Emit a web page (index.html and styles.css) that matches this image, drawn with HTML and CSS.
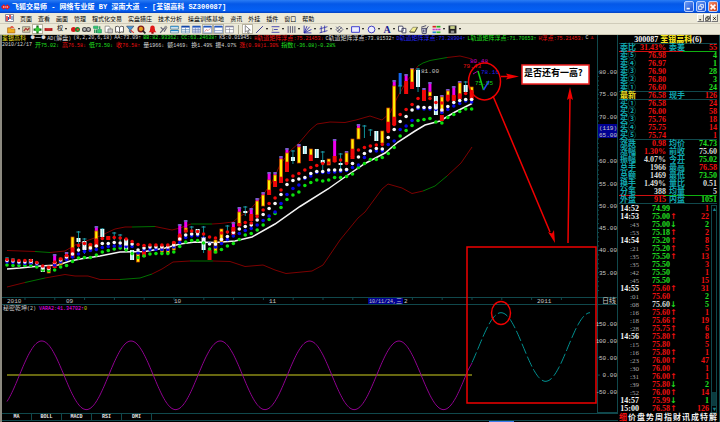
FILE: index.html
```html
<!DOCTYPE html>
<html lang="zh-CN">
<head>
<meta charset="utf-8">
<title>飞狐交易师</title>
<link rel="stylesheet" href="styles.css">
</head>
<body>
<header class="titlebar">
  <svg class="logo" viewBox="0 0 10 8"><path d="M0 4 3 1 5 3 7 1 10 4 7 7 5 5 3 7z" fill="#e81818"/><path d="M3 3v2M7 3v2M4 4h2" stroke="#ffd0d0"/></svg>
  <h1>飞狐交易师 - 网络专业版 BY 深南大道 - [荃银高科 SZ300087]</h1>
  <div class="win">
    <button aria-label="最小化"><svg viewBox="0 0 10 10"><path d="M2 7h4" stroke="#fff" stroke-width="2"/></svg></button>
    <button aria-label="还原"><svg viewBox="0 0 10 10"><path d="M4 4V2h4v4H6M2 4h4v4H2z" fill="none" stroke="#fff"/></svg></button>
    <button class="close" aria-label="关闭"><svg viewBox="0 0 10 10"><path d="m2 2 6 6M8 2 2 8" stroke="#fff" stroke-width="2"/></svg></button>
  </div>
</header>
<nav class="menubar">
  <svg class="doc" viewBox="0 0 9 8"><path d="M.5.5h8v7h-8z" fill="#fff" stroke="#889"/><path d="M2 2v5M5 1v4" stroke="#d22" stroke-width="1.5"/><path d="M3.5 3v3M7 2v4" stroke="#25a"/></svg>
  <button>页面</button><button>查看</button><button>画面</button><button>管理</button><button>程式化交易</button><button>实盘猎庄</button><button>技术分析</button><button>操盘训练基地</button><button>资讯</button><button>外挂</button><button>插件</button><button>窗口</button><button>帮助</button>
  <div class="mdi">
    <button aria-label="最小化窗口"><svg viewBox="0 0 8 8"><path d="M2 6h3" stroke="#000" stroke-width="1.5"/></svg></button>
    <button aria-label="还原窗口"><svg viewBox="0 0 8 8"><path d="M3 3V1h4v4H5M1 3h4v4H1z" fill="none" stroke="#000"/></svg></button>
    <button aria-label="关闭窗口"><svg viewBox="0 0 8 8"><path d="m2 2 4 4M6 2 2 6" stroke="#000" stroke-width="1.3"/></svg></button>
  </div>
</nav>
<div class="toolbar" role="toolbar">
  <button class="drop" aria-label="打开"><svg viewBox="0 0 16 16"><path d="M1 14V5h5l1 2h7v7z" fill="#f0b020" stroke="#a05010"/><path d="M5 5c1-4 6-4 8 0l-3 0z" fill="#e03020"/></svg></button>
  <button aria-label="保存画面"><svg viewBox="0 0 16 16"><path d="M1 3h13v10H1z" fill="#d8d0a8" stroke="#555"/><path d="m3 11 4-5 3 3 3-4" stroke="#a33" fill="none" stroke-width="2"/></svg></button>
  <button class="on" aria-label="放大"><svg viewBox="0 0 16 16"><path d="M8 1v14M1 8h14" stroke="#186818" stroke-width="4"/><circle cx="8" cy="8" r="4" fill="#3c3"/></svg></button>
  <button aria-label="缩小"><svg viewBox="0 0 16 16"><path d="M1 8h14" stroke="#b01818" stroke-width="5"/><path d="M4 7h8" stroke="#f66"/></svg></button>
  <button class="drop gap">权</button>
  <button aria-label="对比"><svg viewBox="0 0 16 16"><circle cx="4.500" cy="8" r="4.500" fill="#d81818"/><circle cx="11.500" cy="8" r="4.500" fill="#18882a"/><circle cx="12" cy="8" r="2" fill="#f33"/></svg></button>
  <button aria-label="查找"><svg viewBox="0 0 16 16"><circle cx="4.500" cy="8" r="3.500" fill="#bbb" stroke="#444" stroke-width="2"/><circle cx="11.500" cy="8" r="3.500" fill="#bbb" stroke="#444" stroke-width="2"/></svg></button>
  <button aria-label="统计"><svg viewBox="0 0 16 16"><path d="M1 2h8v4H1zM8 8h7v6H8z" fill="#3c6" stroke="#186"/><path d="M3 8v6M6 8v6M12 2v5" stroke="#1a8a4a" stroke-width="2"/></svg></button>
  <button aria-label="文件"><svg viewBox="0 0 16 16"><path d="M2 2h7l2 3v8H2z" fill="#fff" stroke="#555"/><path d="M7 7h8v7H7z" fill="#ccc" stroke="#555"/></svg></button>
  <button aria-label="书籍"><svg viewBox="0 0 16 16"><path d="M1 3q4-2 7 1 3-3 7-1v10q-4-2-7 1-3-3-7-1zM8 4v10" fill="#fff" stroke="#444" stroke-width="1.500"/></svg></button>
  <button aria-label="选股"><svg viewBox="0 0 16 16"><path d="M1 2h13l-5 6v6l-3-2V8z" fill="#4a9ad8" stroke="#235"/><path d="m8 9 6 5" stroke="#d33" stroke-width="2"/></svg></button>
  <button aria-label="搜索"><svg viewBox="0 0 16 16"><circle cx="7" cy="7" r="5" fill="#e8a020" stroke="#801818" stroke-width="2.500"/><path d="m10 10 5 5" stroke="#222" stroke-width="3"/></svg></button>
  <button aria-label="预警"><svg viewBox="0 0 16 16"><path d="M1 13q3-3 3-7 0-5 4-5t4 5q0 4 3 7z" fill="#e01818"/><path d="M6 14h4" stroke="#900" stroke-width="3"/></svg></button>
  <button aria-label="工具"><svg viewBox="0 0 16 16"><path d="m2 14 9-10M3 4l5 5M9 12l5-8" stroke="#667" stroke-width="2"/><circle cx="12" cy="4" r="2.500" fill="#999"/></svg></button>
  <button aria-label="横排"><svg viewBox="0 0 16 16"><path d="M1 2h14v5H1zM1 9h14v5H1z" fill="#fff" stroke="#157"/><path d="M1 3h14M1 10h14" stroke="#28c" stroke-width="2"/></svg></button>
  <button aria-label="列表"><svg viewBox="0 0 16 16"><path d="M1 2h14v12H1zM1 8h14M8 5v9M1 11h14" fill="#fff" stroke="#47a"/><path d="M1 3h14" stroke="#14a" stroke-width="3"/></svg></button>
  <button aria-label="网格"><svg viewBox="0 0 16 16"><path d="M1 2h14v12H1zM1 8h14M6 5v9M11 5v9M1 11h14" fill="#dde6f8" stroke="#67a"/><path d="M1 3h14" stroke="#25b" stroke-width="3"/></svg></button>
  <button class="on" aria-label="走势"><svg viewBox="0 0 16 16"><path d="M1 2h14v12H1z" fill="#fff" stroke="#46a"/><path d="M1 3h14" stroke="#25b" stroke-width="3"/><path d="m3 12 3-4 3 2 4-4" stroke="#c44" fill="none"/></svg></button>
  <button class="on" aria-label="图表"><svg viewBox="0 0 16 16"><path d="M1 2h14v12H1zM1 10h14" fill="#fff" stroke="#46a"/><path d="M1 3h14" stroke="#25b" stroke-width="3"/></svg></button>
  <button aria-label="表格"><svg viewBox="0 0 16 16"><path d="M1 2h14v12H1zM1 8h14M8 5v9" fill="#fff" stroke="#778"/><path d="M1 3h14" stroke="#779" stroke-width="2"/></svg></button>
  <span class="grip"></span>
  <button class="on" aria-label="光标"><svg viewBox="0 0 16 16"><path d="M4 1v12l3-3 2 5 2-1-2-5h4z" fill="#fff" stroke="#333"/></svg></button>
  <button class="drop" aria-label="直线"><svg viewBox="0 0 16 16"><path d="M2 14 14 2" stroke="#228" stroke-width="1.500"/></svg></button>
  <button class="drop" aria-label="水平线"><svg viewBox="0 0 16 16"><path d="M1 3h14M1 13h14M5 8h7" stroke="#33a" stroke-width="1.500"/><path d="M3 6v5" stroke="#666"/></svg></button>
  <button class="drop" aria-label="周期线"><svg viewBox="0 0 16 16"><path d="M2 2v12M6 2v12M10 2v12M14 2v12" stroke="#446" stroke-width="1.500"/></svg></button>
  <button class="drop" aria-label="扇形线"><svg viewBox="0 0 16 16"><path d="M2 1v13h13M2 14 7 2M2 14 12 3M2 14 15 8" stroke="#22a" stroke-width="1.500" fill="none"/></svg></button>
  <button class="drop" aria-label="通道"><svg viewBox="0 0 16 16"><path d="m1 7 14-4M1 14l14-4M4 2v12M10 1v12" stroke="#33a" stroke-width="1.500"/></svg></button>
  <button class="drop" aria-label="波浪"><svg viewBox="0 0 16 16"><path d="m2 8 6-6 6 6-6 6zM4 12l8-8M2 3l9 9" stroke="#557" fill="none" stroke-width="1.500"/></svg></button>
  <button class="drop" aria-label="矩形"><svg viewBox="0 0 16 16"><path d="M1 3h14v10H1z" fill="#eef" stroke="#22c" stroke-width="1.500"/></svg></button>
  <button class="drop" aria-label="圆形"><svg viewBox="0 0 16 16"><circle cx="8" cy="8" r="6" fill="#eef" stroke="#22b" stroke-width="1.500"/></svg></button>
  <button class="drop letter">A</button>
  <button aria-label="复制"><svg viewBox="0 0 16 16"><path d="M1 2h7l1 2v7H1zM7 6h7v8H7z" fill="#fff" stroke="#335" stroke-width="1.500"/></svg></button>
  <button aria-label="橡皮"><svg viewBox="0 0 16 16"><path d="m1 12 6-8h8l-5 9H2z" fill="#f4ee90" stroke="#554"/><path d="m1 12 9 1 5-9" fill="none" stroke="#443" stroke-width="1.500"/></svg></button>
  <button aria-label="清除"><svg viewBox="0 0 16 16"><path d="M3 6h9l-1 9H4z" fill="#dde" stroke="#335" stroke-width="1.500"/><path d="m2 4 9-3M6 8v5M9 8v5M10 9l5-7" stroke="#335" stroke-width="1.500"/></svg></button>
  <button class="drop" aria-label="颜色"><svg viewBox="0 0 16 16"><path d="M1 3h6" stroke="#d22" stroke-width="3"/><path d="M8 3h7" stroke="#2a2" stroke-width="3"/><path d="M1 8h14" stroke="#c3c" stroke-width="3" stroke-dasharray="4 1"/><path d="M1 13h6" stroke="#28d" stroke-width="3"/><path d="M8 13h7" stroke="#3b3" stroke-width="3"/></svg></button>
  <button class="drop" aria-label="保存"><svg viewBox="0 0 16 16"><path d="M1 1h14v14H1z" fill="#222"/><path d="M4 2h8v5H4z" fill="#c8d088"/><path d="M5 10h6v4H5z" fill="#999"/></svg></button>
</div>
<main class="desk">
  <section class="chart">
    <div class="info">
      <p><span class="y name"><i>荃银高科</i></span><span><i class="bullet">●—●</i>AD(<i>解盘</i>)</span><span>(8,2,20,6,18)</span><span>AA:73.09↑</span><span class="g">BB:82.93362↓</span><span class="g">CC:63.24638↑</span><span>KS:0.01945↓</span><span class="r">H<i>轨道矩阵浮点</i>:75.21453↓</span><span>C<i>轨道矩阵浮点</i>:73.81532↑</span><span class="b">D<i>轨道矩阵浮点</i>:73.28904↑</span><span class="g">L<i>轨道矩阵浮点</i>:71.70653↑</span><span class="r">H<i>浮点</i>:75.21453↓</span><span>C</span><span class="r">⚓</span></p>
      <p class="day"><span>2010/12/17</span><span class="g"><i>开</i>75.02↓</span><span class="r"><i>高</i>76.58↓</span><span class="g"><i>低</i>73.50↓</span><span class="r"><i>收</i>76.58↑</span><span><i>量</i>1966↓</span><span><i>额</i>1469↓</span><span><i>换</i>1.49%</span><span><i>振</i>4.07%</span><span class="r"><i>涨</i>(0.98)1.30%</span><span class="g"><i>指数</i>(-36.08)-0.28%</span></p>
    </div>
    <svg id="plot" viewBox="2 35 616 378">
      <g class="frame">
        <path d="M597.5 35V413M617.500 35V413M2 297.500H618M2 304.500H618M597 412.500H618"/>
        <path id="ticks"/>
      </g>
      <g id="bands"></g>
      <path id="average" class="average"/>
      <g id="candles"></g>
      <g id="dots"></g>
      <path class="zero" d="M7 375H472"/>
      <path id="wave" class="wave"/>
      <path id="forecast" class="forecast"/>
      <g id="scale" class="scale"></g>
      <rect x="598" y="124" width="19" height="14" fill="#000090"/>
      <g class="scale"><text x="617" y="130">(119)</text><text x="617" y="137">65.00</text></g>
      <g class="axis">
        <text x="7" y="303">2010</text><text x="66" y="303">09</text><text x="174" y="303">10</text><text x="269" y="303">11</text>
        <rect x="368" y="298" width="35" height="6" fill="#000090"/>
        <text class="small" x="369" y="303">10/11/24,<tspan class="mid">三</tspan></text><text x="404" y="303">2</text><text x="537" y="303">2011</text>
        <text class="cjk" x="602" y="303">日线</text>
        <text class="small" x="3" y="310"><tspan class="mid">秘密乾坤</tspan>(2)</text><text class="small" x="39" y="310" fill="#f0f">VARA2:41.34702↑<tspan fill="#cc0">0</tspan></text>
        <text x="421" y="73">81.00</text><text x="463" y="68" fill="#e01010">79.43</text><text x="470" y="63" fill="#d000d0">80.48</text>
        <text x="481" y="74" fill="#2020f0">78.16</text><text x="475" y="85" fill="#18d018">75.95</text>
      </g>
      <path d="m473 74 5-3" stroke="#a0a"/><path d="m478 71 5.500 19" stroke="#1c1" stroke-width="1.500"/><path d="m483.500 90 5.500-9" stroke="#24e" stroke-width="1.500"/>
      <g class="mark">
        <ellipse cx="484.500" cy="81.500" rx="16" ry="18.500"/>
        <ellipse cx="501" cy="313" rx="9.500" ry="11.500"/>
        <rect x="467" y="247" width="129" height="156"/>
        <path d="M501 76.500H512M493 96 550 232M568 243 570 98"/>
        <path class="head" d="m519 76.500-13-3 2 3-2 3zM555 243l-7-11 4 1.500 2-3.500zM570 87l-3 13 3-2 3 2z"/>
      </g>
      <rect x="522" y="65" width="67" height="19" fill="#fff" stroke="#f02020" stroke-width="1.500"/>
      <text class="note" x="524" y="76">是否还有一高?</text>
    </svg>
    <div class="tabs"><button>MA</button><button>BOLL</button><button>MACD</button><button>RSI</button><button>DMI</button></div>
    <div class="edge"><span></span></div>
  </section>
  <aside class="side">
    <h2>300087 <b>荃银高科</b>(6)</h2>
    <table class="quote">
      <tbody>
      <tr class="split"><th>委比</th><td class="r">31.43%</td><th>委差</th><td class="r">55</td></tr>
      <tr><th>卖⑤</th><td class="r">76.98</td><th></th><td class="g">4</td></tr>
      <tr><th>卖④</th><td class="r">76.97</td><th></th><td class="g">1</td></tr>
      <tr><th>卖③</th><td class="r">76.90</td><th></th><td class="g">28</td></tr>
      <tr><th>卖②</th><td class="r">76.80</td><th></th><td class="g">3</td></tr>
      <tr class="rule"><th>卖①</th><td class="r">76.60</td><th></th><td class="g">24</td></tr>
      <tr class="rule"><th class="y">最新</th><td class="r">76.58</td><th>现手</th><td class="r">126</td></tr>
      <tr><th>买①</th><td class="r">76.58</td><th></th><td class="r">24</td></tr>
      <tr><th>买②</th><td class="r">76.00</td><th></th><td class="r">58</td></tr>
      <tr><th>买③</th><td class="r">75.76</td><th></th><td class="r">18</td></tr>
      <tr><th>买④</th><td class="r">75.75</td><th></th><td class="r">14</td></tr>
      <tr class="rule"><th>买⑤</th><td class="r">75.74</td><th></th><td class="r">1</td></tr>
      <tr><th>涨跌</th><td class="r">0.98</td><th>均价</th><td class="g">74.73</td></tr>
      <tr><th>涨幅</th><td class="r">1.30%</td><th>前收</th><td>75.60</td></tr>
      <tr><th>振幅</th><td>4.07%</td><th>今开</th><td class="g">75.02</td></tr>
      <tr><th>总手</th><td>1966</td><th>最高</th><td class="r">76.58</td></tr>
      <tr><th>总额</th><td>1469</td><th>最低</th><td class="g">73.50</td></tr>
      <tr><th>换手</th><td>1.49%</td><th>量比</th><td>0.51</td></tr>
      <tr class="split half"><th>分笔</th><td>388</td><th>均量</th><td>5</td></tr>
      <tr class="rule"><th>外盘</th><td class="r">915</td><th>内盘</th><td class="g">1051</td></tr>
      </tbody>
    </table>
    <div class="deals">
      <table class="trades"><tbody id="trades"></tbody></table>
      <div class="scroll"><span>▴</span><span class="thumb"></span><span>▾</span></div>
    </div>
    <div class="pages"><button class="r">细</button><button>价</button><button>盘</button><button>势</button><button>周</button><button>指</button><button>财</button><button>讯</button><button>成</button><button>特</button><button>解</button></div>
  </aside>
</main>
<script src="chart.js"></script>
</body>
</html>
```
FILE: styles.css
```css
* { box-sizing: border-box; }
body {
  margin: 0;
  min-height: 100vh;
  background: #000;
  color: #d8d8d8;
  font-family: "Liberation Mono", "Noto Sans CJK SC", monospace;
  font-size: 6px;
}
button {
  margin: 0;
  padding: 0;
  border: 0;
  background: none;
  color: inherit;
  font: inherit;
}
svg { display: block; }
h1, h2, p { margin: 0; }

.titlebar {
  display: flex;
  align-items: center;
  gap: 2px;
  height: 13px;
  padding: 0 2px 0 1px;
  background: linear-gradient(#2a7cf4, #0458e8 30%, #0560f4 80%, #0340c0);
  color: #fff;
}
.logo { width: 9px; height: 8px; }
h1 {
  flex: 1;
  font-size: 7px;
  line-height: 12px;
  white-space: nowrap;
}
.win { display: flex; gap: 2px; }
.win button {
  width: 10px;
  height: 11px;
  border: 1px solid #b8d0ff;
  border-radius: 2px;
  background: linear-gradient(135deg, #6a9cf8, #1c50d0);
}
.win .close { background: linear-gradient(135deg, #f09070, #d03810); }

.menubar, .toolbar {
  display: flex;
  align-items: center;
  height: 11px;
  background: #ece9d8;
  color: #000;
}
.menubar {
  gap: 6px;
  padding: 0 2px 0 5px;
  border-bottom: 1px solid #d0ccba;
  font-family: "Noto Sans CJK SC", sans-serif;
  line-height: 9px;
  white-space: nowrap;
}
.doc { width: 9px; height: 8px; }
.mdi { display: flex; margin-left: auto; }
.mdi button {
  width: 7px;
  height: 8px;
  border: 1px solid;
  border-color: #fff #777 #777 #fff;
}
.toolbar { padding-left: 5px; border-bottom: 1px solid #c8c4b0; }
.toolbar button {
  display: flex;
  align-items: center;
  justify-content: center;
  width: 11px;
  height: 10px;
  line-height: 8px;
}
.toolbar svg { width: 9px; height: 9px; }
.toolbar .drop { width: 16px; gap: 2px; }
.toolbar .drop::after {
  content: "";
  border: 1px solid transparent;
  border-top: 2px solid #000;
  border-bottom: 0;
}
.toolbar .on { background: #fff; border: 1px solid #b8b4a0; }
.toolbar .letter {
  color: #1a1a90;
  font: bold 10px "Liberation Serif", serif;
  line-height: 9px;
}
.grip { width: 1px; height: 9px; margin: 0 3px; background: #aaa692; }

.desk { display: grid; grid-template-columns: minmax(0, 1fr) 102px; }
.chart {
  position: relative;
  border-left: 2px solid #8c8a80;
}
.info {
  position: absolute;
  top: 0;
  left: 0;
  right: 0;
  font-size: 5px;
  line-height: 7px;
  white-space: nowrap;
}
.info p { display: flex; gap: 2px; height: 7px; }
.info .day { gap: 3px; }
.info i { font-size: 6px; font-style: normal; }
.info .bullet { padding-right: 1px; font-size: 9px; line-height: 7px; }
.info .name { margin-right: 2px; }
#plot { width: 100%; height: auto; }
.r { color: #f01010; }
.g { color: #20e020; }
.b { color: #2828ff; }
.y { color: #f0e020; }
.frame path { fill: none; stroke: #10484c; }
.average { fill: none; stroke: #f4f4f4; stroke-width: 1.5; }
.band-r, .band-g { fill: none; stroke: #7c0000; }
.band-g { stroke: #007000; }
.zero { stroke: #686810; stroke-width: 2; }
.wave { fill: none; stroke: #900090; }
.forecast { fill: none; stroke: #009090; stroke-dasharray: 11 3; }
.scale, .axis { fill: #c8c8c8; font-size: 6px; }
.scale { text-anchor: end; }
.small { font-size: 5px; }
.mid { font-size: 6px; }
.cjk { font-size: 7px; }
.mark { fill: none; stroke: #f00000; stroke-width: 1.5; }
.mark .head { fill: #f00000; stroke: none; }
.note {
  fill: #000;
  font: bold 9px "Noto Sans CJK SC", sans-serif;
}
.tabs {
  display: flex;
  height: 8px;
  border-top: 1px solid #10484c;
  border-bottom: 1px solid #10484c;
}
.tabs button {
  width: 30px;
  border-right: 1px solid #10484c;
  color: #e8e8e8;
  font-weight: bold;
  font-size: 5px;
  line-height: 6px;
}
.edge { height: 1px; padding-left: 79%; }
.edge span { display: block; width: 25px; height: 1px; background: #3c7cf0; }

.side {
  padding: 0 2px 0 1px;
  border-right: 1px solid #10484c;
  font: bold 8px "Liberation Serif", "Noto Sans CJK SC", serif;
  line-height: 8px;
}
h2 {
  height: 9px;
  color: #f4f4f4;
  font-size: 8px;
  line-height: 9px;
  text-align: center;
  border-bottom: 1px solid #10484c;
}
h2 b { color: #f0e020; }
table { width: 100%; border-collapse: collapse; table-layout: fixed; }
tr { height: 8px; }
th, td {
  height: 8px;
  padding: 0;
  line-height: 8px;
  text-align: right;
  white-space: nowrap;
}
.quote th {
  width: 18px;
  padding-left: 1px;
  color: #10a8b0;
  text-align: left;
}
.quote .y { color: #f0e020; }
.quote th + td { width: 28px; }
.quote th:nth-child(3) { padding-left: 3px; width: 22px; }
.rule { box-shadow: inset 0 -1px #10484c; }
.split { background: linear-gradient(90deg, #d01010 65%, #10b010 65%) bottom / 100% 1px no-repeat; }
.half { background-image: linear-gradient(90deg, #d01010 46%, #10b010 46%); }
.deals { display: flex; padding-top: 1px; }
.trades { flex: 1; }
.trades th { width: 20px; color: #f4f4f4; }
.trades .second { color: #a8a8a8; font-weight: normal; font-size: 7px; }
.trades th + td { width: 31px; }
.trades .arrow { width: 6px; text-align: left; font-family: "DejaVu Sans", sans-serif; }
.scroll {
  display: flex;
  flex-direction: column;
  width: 6px;
  margin-left: 2px;
  border: 1px solid #10484c;
  color: #18808a;
  font-size: 6px;
  line-height: 6px;
  text-align: center;
}
.thumb { height: 14px; margin-top: auto; background: #0c3c40; }
.pages {
  display: flex;
  justify-content: space-between;
  padding-top: 1px;
}
.pages button { color: #f0f0f0; line-height: 8px; }
.pages .r { color: #f01010; }
```
FILE: chart.js
```javascript
const NS = "http://www.w3.org/2000/svg";
const byId = (id) => document.getElementById(id);
const barX = (i) => 7 + i * 5.957;

function add(parent, name, attrs, text) {
  const node = document.createElementNS(NS, name);
  for (const key in attrs) node.setAttribute(key, attrs[key]);
  if (text !== undefined) node.textContent = text;
  parent.appendChild(node);
}

// Dots: one list per series, one value per bar.
const series = {
  "#0ce00c": [265, 265.5, 265.5, 265.5, 265.5, 267, 270, 270.5, 270, 267, 265.5, 261.5, 258, 257.5, 257.5, 255, 252, 250.5, 249, 248, 250, 253.5, 257.5, 256, 254, 253.5, 253.5, 253.5, 252, 246.5, 242, 240.5, 240.5, 243, 249, 252, 249.5, 246, 243.5, 239.5, 235, 233.5, 230, 225, 219.5, 213.5, 207.5, 199.5, 195, 192, 185.5, 182.5, 180, 181, 180, 177.5, 177.5, 176.5, 174, 167.5, 163.5, 159.5, 159.5, 157.5, 153.5, 147.5, 136, 130.5, 125.5, 120.5, 119.5, 118.5, 122, 123, 117.5, 114.5, 111.5, 109, 109],
  "#0808e8": [262, 262.5, 263, 263.5, 263, 264, 267, 268, 265, 262, 259.5, 257, 254, 251.5, 250.5, 249.5, 247.5, 246.5, 246, 246, 246.5, 246.5, 253, 250, 249.5, 249.5, 249.5, 249.5, 247, 242.5, 237.5, 236, 235.5, 238, 243.5, 247, 243.5, 239.5, 236, 233.5, 230.5, 228.5, 225, 220.5, 216, 212, 203.5, 194.5, 188.5, 185, 178.5, 176, 172.5, 172.5, 172.5, 172, 171.5, 170.5, 167.5, 165, 157.5, 151, 151, 151, 144.5, 141, 129.5, 126, 120.5, 108.5, 109, 109, 109.5, 112.5, 109.5, 106, 103.5, 101, 102],
  "#f8f8f8": [260.5, 261, 262, 262, 261.5, 263, 268, 268.5, 262.5, 260, 257, 254, 250, 248, 248, 246, 243.5, 243.5, 242.5, 243, 244, 244, 250, 248, 247, 247, 247, 247, 245, 239, 235, 234, 234, 239, 244, 244, 239.5, 236.5, 232.5, 229, 226.5, 225, 220, 214.5, 208.5, 203.5, 194.5, 184.5, 180.5, 179, 177.5, 173.5, 171.5, 171.5, 170, 170, 170, 169.5, 163.5, 157, 153.5, 151, 148.5, 149, 137.5, 129.5, 121.5, 116.5, 110, 107, 107.5, 107.5, 108, 110, 106.5, 102.5, 100.5, 99.5, 99.5],
  "#f00808": [259.5, 260, 260.5, 260.5, 260.5, 262.5, 266, 267.5, 262, 259, 255.5, 249, 245.5, 243.5, 244.5, 240, 238.5, 238, 237.5, 238, 239, 241.5, 244.5, 245.5, 245, 245, 245, 245, 242.5, 235, 231, 231, 231.5, 234, 237, 238, 233, 232, 230, 225, 222.5, 223, 216.5, 210, 203.5, 198, 190, 180, 176, 173.5, 170, 167.5, 165.5, 163.5, 163, 161, 160, 163.5, 156.5, 150, 147.5, 146, 145, 144.5, 131.5, 124.5, 114.5, 109.5, 104.5, 98.5, 98.5, 98.5, 102.5, 103, 100, 96.5, 95, 93.5, 91.5]
};

// Candle parts: bar, fill code, top, bottom.
const parts = [
  [0, "t", 257, 265], [1, "t", 258, 264], [4, "c", 259, 264], [6, "c", 266, 272], [7, "y", 266, 273],
  [8, "m", 254, 262], [8, "r", 262, 268], [9, "y", 258, 265], [10, "m", 252, 255], [10, "r", 255, 260],
  [11, "y", 237, 248], [11, "r", 248, 258], [12, "t", 231, 252], [12, "c", 238, 242], [13, "t", 238, 254],
  [13, "c", 241, 250], [14, "y", 244, 250], [15, "m", 226, 231], [15, "y", 231, 240], [15, "r", 240, 247],
  [16, "t", 228, 238], [16, "c", 229, 237], [17, "r", 236, 240], [18, "t", 232, 240], [19, "t", 234, 241],
  [20, "c", 239, 250], [21, "c", 250, 260], [22, "y", 254, 262], [23, "r", 250, 257], [26, "y", 246, 252],
  [27, "y", 246, 253], [28, "y", 242, 250], [29, "m", 224, 235], [29, "r", 235, 241], [30, "m", 220, 229],
  [30, "y", 228, 232], [31, "t", 226, 232], [32, "c", 229, 233], [33, "t", 226, 253], [33, "c", 237, 250],
  [34, "r", 250, 260], [35, "y", 240, 253], [36, "y", 229, 242], [37, "t", 225, 234], [38, "m", 222, 227],
  [38, "r", 227, 235], [39, "m", 207, 212], [39, "y", 212, 224], [39, "r", 223, 226], [40, "t", 206, 216],
  [40, "c", 211, 213], [41, "m", 208, 214], [41, "r", 214, 221], [42, "m", 198, 201], [42, "y", 201, 215],
  [43, "m", 192, 195], [43, "y", 195, 206], [44, "m", 172, 180], [44, "y", 180, 190], [44, "r", 190, 195],
  [45, "m", 172, 175], [45, "y", 175, 182], [45, "r", 181, 187], [46, "m", 156, 159], [46, "y", 159, 177],
  [46, "r", 177, 183], [47, "m", 148, 153], [47, "y", 153, 162], [47, "r", 162, 172], [48, "t", 150, 164],
  [48, "c", 157, 161], [49, "m", 144, 148], [49, "y", 147, 163], [50, "c", 146, 154], [51, "y", 149, 155],
  [51, "r", 155, 161], [52, "c", 149, 158], [53, "t", 151, 171], [53, "c", 160, 163], [54, "y", 159, 165],
  [55, "m", 139, 156], [55, "r", 156, 162], [56, "t", 153, 170], [56, "c", 163, 165], [57, "m", 151, 153],
  [57, "y", 153, 163], [58, "y", 139, 149], [58, "r", 149, 159], [59, "m", 124, 129], [59, "y", 128, 139],
  [60, "t", 125, 138], [61, "t", 129, 136], [62, "c", 131, 141], [63, "y", 131, 143], [64, "y", 108, 122],
  [64, "r", 122, 131], [65, "m", 80, 86], [65, "y", 86, 117], [65, "r", 117, 125], [66, "b", 73, 86],
  [66, "t", 85, 94], [67, "m", 74, 82], [67, "r", 81, 94], [68, "m", 68, 70], [68, "y", 69, 82],
  [68, "r", 82, 89], [69, "t", 68, 92], [69, "c", 70, 87], [70, "m", 88, 90], [70, "r", 90, 101],
  [71, "m", 82, 92], [71, "y", 92, 96], [72, "c", 96, 115], [73, "m", 95, 97], [73, "y", 97, 113],
  [73, "r", 115, 121], [74, "m", 89, 91], [74, "y", 91, 95], [74, "r", 95, 100], [75, "m", 86, 95],
  [75, "r", 95, 101], [76, "m", 81, 83], [76, "y", 83, 94], [76, "r", 94, 99], [77, "t", 81, 95],
  [77, "c", 85, 92], [78, "y", 87, 93], [78, "r", 92, 100]
];
const fills = { y: "#fff000", m: "#f000f0", c: "#f4ffff", r: "#f00808", t: "#109098", b: "#1468f0" };

const candles = byId("candles");
for (const [bar, kind, top, bottom] of parts) {
  const x = barX(bar);
  const width = { t: 1, y: 3, m: 3, b: 3 }[kind] || 4;
  const attrs = { x: x - width / 2, y: top, width, height: bottom - top, fill: fills[kind] };
  if (kind === "y") Object.assign(attrs, { stroke: "#d04000", "stroke-width": 0.7 });
  add(candles, "rect", attrs);
  if (kind === "c") add(candles, "path", { d: `M${x} ${top}V${bottom}`, stroke: "#70d8dc" });
  if (kind === "m" || kind === "t") add(candles, "path", { d: `M${x - 2} ${top + 1}h4`, stroke: "#20a0b0" });
}

const dots = byId("dots");
for (const color in series) {
  series[color].forEach((y, i) => add(dots, "circle", { cx: barX(i), cy: y, r: 1.8, fill: color }));
}

const bands = [
  ["r", "7,250.5 35,251.5"], ["g", "35,251.5 50,252.5"],
  ["r", "50,252.5 65,251 75,245 100,236 115,229 125,227 132,227"], ["g", "132,227 155,226.5"],
  ["r", "155,226.5 172,230 180,228 191,224"], ["g", "191,224 212,224"],
  ["r", "212,224 220,223.5 233,222 240,216 247,213 263,195 272,182 280,165 290,151 299,143 310,130 317,124 330,122 345,122.5 356,120 370,116 382,120 390,113 397,98 405,84 418,66"],
  ["g", "418,66 423,63 430,60.5 447,57.5"], ["r", "447,57.5 460,56 472,59"],
  ["r", "7,287 25,282.5"], ["g", "25,282.5 45,278"],
  ["r", "45,278 65,274.5 75,276 88,276 100,279.5 120,279.5"], ["g", "120,279.5 140,278 152,274"],
  ["r", "152,274 162,269 173,262 190,261"], ["g", "190,261 213,261"],
  ["r", "213,261 230,261.5 245,266.5 263,265 275,270 286,273.5 312,271 323,265 340,240 358,218 365,212 382,189 388,184 402,188 412,193.5 423,191"],
  ["g", "423,191 435,186 447,176"], ["r", "447,176 461,163 472,147"]
];
for (const [tone, points] of bands) add(byId("bands"), "polyline", { class: "band-" + tone, points });

byId("average").setAttribute("d", "M7 269 20 268 40 266 58 265 70 261 83 258.5 100 256 120 252 145 251.5 165 248 180 244 195 242 215 242.5 235 241 252 237 275 224 300 206.5 328 189 345 177 365 163.5 385 153 398 142 415 131 425 125 440 121 455 112 472 103.5");

// Cycle curves share one period of fifteen bars.
function cosine(from, to, peak, middle) {
  let d = "";
  for (let x = from; x <= to; x += 1) {
    const y = middle - 34.3 * Math.cos(2 * Math.PI * (x - peak) / 89.3);
    d += (d ? "L" : "M") + x + " " + y.toFixed(1);
  }
  return d;
}
byId("wave").setAttribute("d", cosine(7, 468, 41.7, 375.3) + "L472 363");
byId("forecast").setAttribute("d", cosine(472, 590, 501, 347));

const scale = byId("scale");
let marks = "";
for (let price = 80; price >= 35; price -= 5) {
  const y = 72 + (80 - price) * 4.46;
  if (price !== 65) add(scale, "text", { x: 617, y: y + 2 }, price.toFixed(2));
  for (let k = 0; k < 5; k++) marks += `M598 ${y + k * 4.46}h1`;
}
[150, 100, 50, 0, -50].forEach((value, i) => {
  const y = 323.5 + i * 17.2;
  add(scale, "text", { x: 617, y: y + 2 }, value.toFixed(2));
  marks += `M598 ${y}h2`;
});
for (let x = 25; x < 590; x += 29.8) marks += `M${x} 298v2`;
byId("ticks").setAttribute("d", marks);

// Trades: time, price, direction, price tone, volume, volume tone.
const trades = `14:52 74.99 - g 1 r
14:53 75.00 ↑ g 22 r
:43 75.00 ↓ g 2 g
:53 75.18 ↑ g 2 r
14:54 75.20 ↑ g 8 r
:21 75.20 ↑ g 5 r
:35 75.50 ↑ g 13 r
:35 75.50 - g 3 r
:42 75.50 - g 1 r
:45 75.50 - g 15 r
14:55 75.60 ↑ r 31 r
:01 75.60 - r 2 g
:08 75.60 ↓ w 5 g
:16 75.60 ↑ r 1 r
:18 75.66 ↑ r 19 r
:28 75.75 ↑ r 6 r
14:56 75.80 ↑ r 8 r
:15 75.80 - r 5 r
:16 75.80 ↑ r 1 r
:23 76.00 ↑ r 47 r
:30 76.00 - r 1 r
:31 76.00 ↑ r 1 r
:39 75.80 ↓ r 2 g
:52 76.00 ↑ r 14 r
14:57 75.99 ↓ r 1 g
15:00 76.58 ↑ r 126 r`;
byId("trades").innerHTML = trades.split("\n").map((line) => {
  const [time, price, dir, tone, volume, volumeTone] = line.split(" ");
  const second = time[0] === ":" ? ' class="second"' : "";
  const arrow = dir === "-" ? "" : dir;
  return `<tr><th${second}>${time}</th><td class="${tone}">${price}</td>` +
    `<td class="arrow ${dir === "↓" ? "g" : "r"}">${arrow}</td><td class="${volumeTone}">${volume}</td></tr>`;
}).join("");
```
